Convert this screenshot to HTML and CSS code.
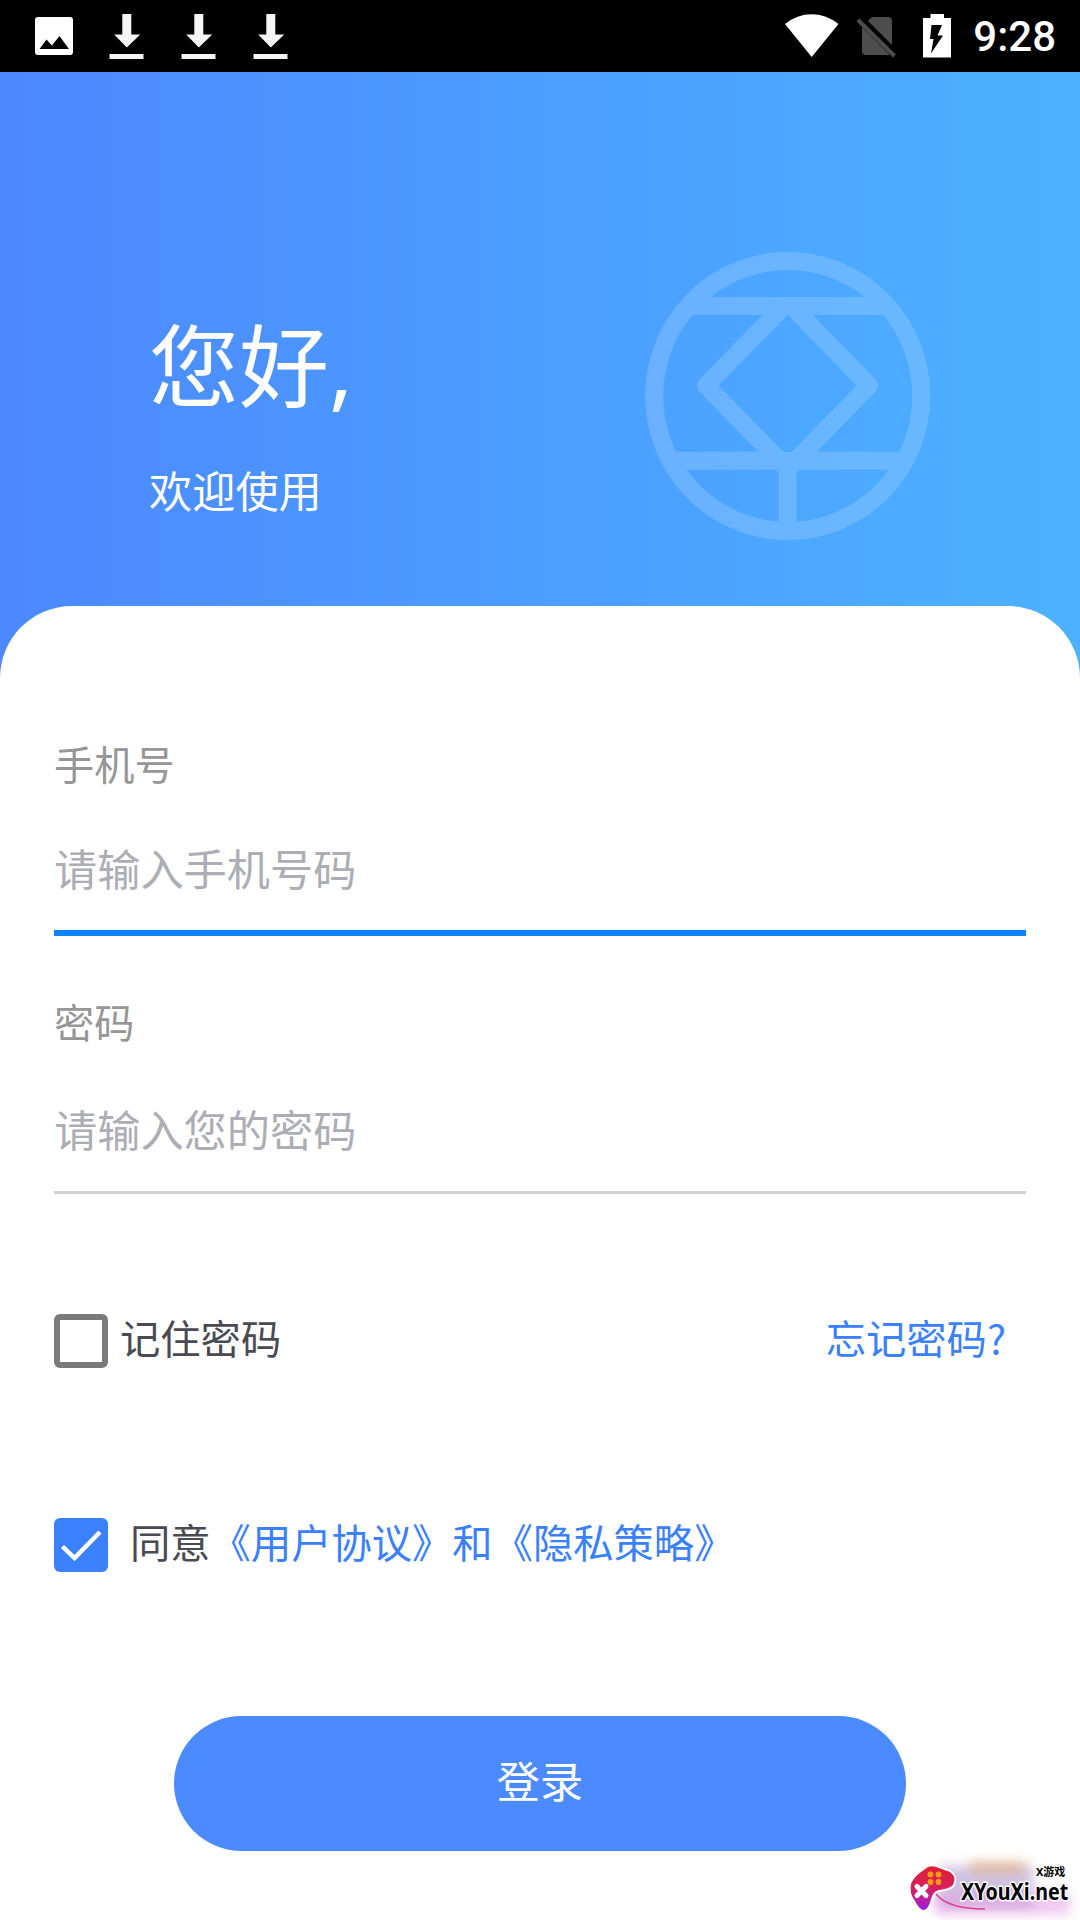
FILE: index.html
```
<!DOCTYPE html>
<html lang="zh-CN">

<head>
    <meta charset="UTF-8">
    <title>登录</title>
    <meta name="viewport" content="width=device-width,initial-scale=1">
    <link rel="stylesheet" href="styles.css">
</head>

<body>
    <div class="statusbar">
        <div class="status-left">
            <svg width="72" height="72" viewBox="0 0 72 72">
                <rect x="17" y="17" width="38" height="38" rx="3" fill="#fff" />
                <path d="M21.5 49 28.5 39.5 33.8 45.5 41.5 36 51 49z" fill="#000" />
            </svg>
            <svg width="72" height="72" viewBox="0 0 72 72" fill="#f5f5f5">
                <path d="M32.3 14h9V34.5h9L36.8 47.5 24.2 34.5h8.1z" />
                <rect x="19.5" y="54" width="34" height="5" />
            </svg>
            <svg width="72" height="72" viewBox="0 0 72 72" fill="#f5f5f5">
                <path d="M32.3 14h9V34.5h9L36.8 47.5 24.2 34.5h8.1z" />
                <rect x="19.5" y="54" width="34" height="5" />
            </svg>
            <svg width="72" height="72" viewBox="0 0 72 72" fill="#f5f5f5">
                <path d="M32.3 14h9V34.5h9L36.8 47.5 24.2 34.5h8.1z" />
                <rect x="19.5" y="54" width="34" height="5" />
            </svg>
        </div>
        <div class="status-right">
            <svg width="72" height="72" viewBox="0 0 72 72">
                <path d="M35.7 57 9 24Q21 14.2 35.7 14.2T62.5 24z" fill="#fff" />
            </svg>
            <svg width="60" height="72" viewBox="0 0 60 72">
                <path d="M20 21 24 17H40Q44 17 44 21V45z" fill="#4d4d4d" />
                <path d="M14 27 42 55H18Q14 55 14 51z" fill="#4d4d4d" />
                <path d="M10 20 46.5 56" fill="none" stroke="#4d4d4d" stroke-width="4" />
            </svg>
            <svg width="58" height="72" viewBox="0 0 58 72">
                <path d="M15 18h7.5v-4H36v4h7v39.5H15z" fill="#fff" />
                <path d="M23.5 25H34l-4.5 10.5H35l-12 18 2.5-14.5H22z" fill="#000" />
            </svg>
            <span class="clock">9:28</span>
        </div>
    </div>

    <div class="header">
        <div class="greeting">
            <h1>您好,</h1>
            <p>欢迎使用</p>
        </div>
        <svg class="logo" width="286" height="290" viewBox="0 0 286 290" fill="none" stroke="#fff" stroke-width="18">
            <clipPath id="below-bar">
                <rect x="0" y="46" width="286" height="244" />
            </clipPath>
            <ellipse cx="142.7" cy="145" rx="133.5" ry="135" />
            <path d="M44 55H241" />
            <path d="M27 209.7H259" />
            <path d="M142.5 210V276" />
            <path d="M142.7 51 224 134.5 142.7 218 61 134.5z" stroke-linejoin="round" clip-path="url(#below-bar)" />
        </svg>
    </div>

    <div class="card">
        <div class="field active">
            <label>手机号</label>
            <div class="input">请输入手机号码</div>
        </div>
        <div class="field">
            <label>密码</label>
            <div class="input">请输入您的密码</div>
        </div>

        <div class="row remember">
            <span class="checkbox"></span>
            <span class="text">记住密码</span>
            <a class="forget">忘记密码?</a>
        </div>

        <div class="row agree">
            <span class="checkbox checked">
                <svg width="54" height="54" viewBox="0 0 54 54" fill="none" stroke="#fff" stroke-width="4.5">
                    <path d="M8.5 28.5 20.5 40 46 14" />
                </svg>
            </span>
            <span class="text">同意<a>《用户协议》和《隐私策略》</a></span>
        </div>

        <div class="login">登录</div>
    </div>

    <!-- site badge in the corner -->
    <div class="badge">
        <div class="glow glow-purple"></div>
        <div class="glow glow-pink"></div>
        <div class="glow glow-gold"></div>
        <svg width="190" height="70" viewBox="0 0 190 70">
            <defs>
                <linearGradient id="pad" x1="0" y1="0" x2="0" y2="1">
                    <stop offset="0" stop-color="#e01f32" />
                    <stop offset=".5" stop-color="#d81f5c" />
                    <stop offset="1" stop-color="#a01fe0" />
                </linearGradient>
            </defs>
            <path d="M46 44Q58 59 95 59" fill="none" stroke="#d8408c" stroke-width="1.5" />
            <path d="M38 17Q43 15 49 18L60 22Q67 27 63 35Q59 39 49 40Q43 41 41 49Q38 61 33 60Q29 59 25 51Q19 43 21 34Q24 27 31 22Z"
                fill="url(#pad)" stroke="#fff" stroke-width="4" stroke-linejoin="round" paint-order="stroke" />
            <g fill="#ff9c1a">
                <circle cx="40.5" cy="24.5" r="2.9" />
                <circle cx="48.5" cy="24.5" r="2.9" />
                <circle cx="40.5" cy="32" r="2.9" />
                <circle cx="48.5" cy="32" r="2.9" />
            </g>
            <path d="M27 36.5 36 45.5M36 36.5 27 45.5" stroke="#fff" stroke-width="5" stroke-linecap="round" />
            <text class="badge-small" x="146" y="26">X游戏</text>
            <text class="badge-name" transform="translate(71 50) scale(.82 1)">XYouXi.net</text>
        </svg>
    </div>
</body>

</html>
```
FILE: styles.css
```
* {
    box-sizing: border-box;
}

body {
    margin: 0;
    width: 1080px;
    height: 1920px;
    position: relative;
    overflow: hidden;
    background-color: #fff;
    font-family: "Noto Sans CJK SC", sans-serif;
}

svg {
    display: block;
}

/* Android status bar */
.statusbar {
    display: flex;
    justify-content: space-between;
    height: 72px;
    padding: 0 24px 0 18px;
    background-color: #000;
}

.status-left,
.status-right {
    display: flex;
    align-items: center;
}

.clock {
    margin-left: 7px;
    padding-top: 2px;
    color: #fff;
    font-family: Roboto, sans-serif;
    font-size: 42px;
    font-weight: 500;
    line-height: 72px;
}

/* Blue banner, runs on behind the rounded card corners */
.header {
    display: flex;
    justify-content: space-between;
    height: 606px;
    padding: 179px 149px 0;
    background: linear-gradient(to right, #4c88ff, #4c9dff 50%, #4cb2ff);
    color: #fff;
}

.greeting h1 {
    margin: 60px 0 0;
    font-family: "Noto Sans", "Noto Sans CJK SC", sans-serif;
    font-size: 90px;
    font-weight: 400;
    line-height: 108px;
}

.greeting p {
    margin: 40px 0 0;
    font-size: 43.2px;
    line-height: 60px;
}

.logo {
    opacity: 0.16;
}

.card {
    height: 1314px;
    margin-top: -72px;
    padding: 130px 54px 0;
    border-radius: 72px 72px 0 0;
    background-color: #fff;
}

.field {
    display: flex;
    flex-direction: column;
    height: 200px;
    border-bottom: 3px solid #d0d2d3;
}

.field.active {
    margin-bottom: 58px;
    border-bottom: 6px solid #0f82ff;
}

.field label {
    margin-top: -3px;
    color: #969696;
    font-size: 40.2px;
    line-height: 60px;
}

.input {
    margin-top: 47px;
    color: #adadb5;
    font-size: 43.2px;
    line-height: 60px;
}

.active .input {
    margin-top: 44px;
}

.row {
    display: flex;
    align-items: center;
    height: 54px;
    font-size: 40.3px;
    line-height: 46px;
    color: #4a4a52;
}

.row .text,
.row .forget {
    padding-bottom: 9px;
}

.row a {
    color: #3a80ff;
}

.remember {
    margin-top: 120px;
}

.agree {
    margin-top: 150px;
}

.checkbox {
    width: 54px;
    height: 54px;
    border: 6px solid #7a7a7a;
    border-radius: 6px;
}

.checkbox.checked {
    border: none;
    background-color: #3a80ff;
}

.remember .text {
    margin-left: 12px;
}

.agree .text {
    margin-left: 22px;
}

.forget {
    margin-left: auto;
    margin-right: 20px;
}

.login {
    width: 732px;
    height: 135px;
    margin: 144px auto 0;
    border-radius: 68px;
    background-color: #4c8bff;
    color: #fff;
    font-size: 43.2px;
    line-height: 127px;
    text-align: center;
}

.badge {
    position: absolute;
    right: 0;
    bottom: 0;
    width: 190px;
    height: 70px;
}

.badge svg {
    position: relative;
}

.glow {
    position: absolute;
    filter: blur(6px);
}

.glow-purple {
    left: 48px;
    top: 16px;
    width: 95px;
    height: 42px;
    background-color: rgba(150, 120, 190, 0.45);
}

.glow-pink {
    left: 45px;
    top: 44px;
    width: 135px;
    height: 20px;
    background-color: rgba(225, 150, 225, 0.55);
}

.glow-gold {
    left: 80px;
    top: 12px;
    width: 55px;
    height: 10px;
    background-color: rgba(225, 160, 90, 0.6);
}

.badge text {
    font-family: "Noto Sans", "Noto Sans CJK SC", sans-serif;
    font-weight: 700;
    stroke: #fff;
    stroke-width: 3px;
    stroke-linejoin: round;
    paint-order: stroke;
}

.badge-name {
    font-size: 24px;
}

.badge text.badge-small {
    font-size: 11px;
    stroke-width: 2px;
}
```
